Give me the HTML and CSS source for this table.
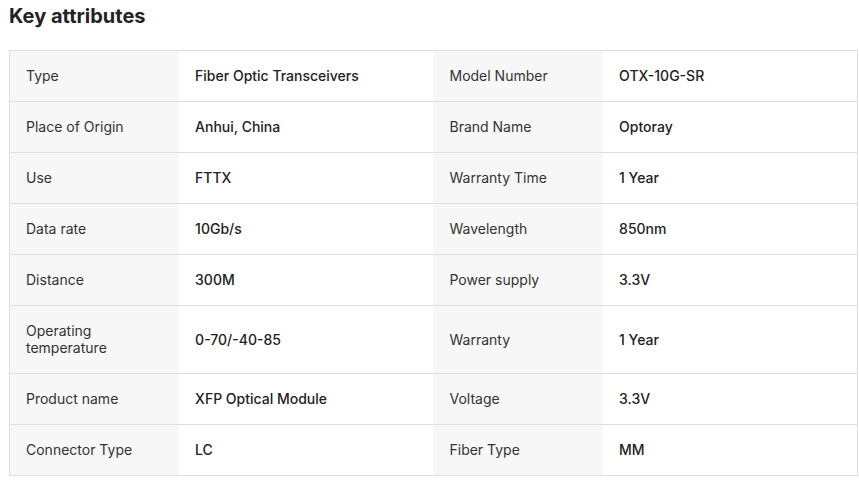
FILE: index.html
```html
<!DOCTYPE html>
<html lang="en">
<head>
<meta charset="utf-8">
<title>Key attributes</title>
<link rel="stylesheet" href="styles.css">
</head>
<body>
<section class="attrs">
  <h2 class="attrs-title">Key attributes</h2>
  <table class="attrs-table">
    <colgroup><col class="c-label"><col class="c-value"><col class="c-label"><col class="c-value"></colgroup>
    <tbody>
      <tr><td class="label">Type</td><td class="value">Fiber Optic Transceivers</td><td class="label">Model Number</td><td class="value">OTX-10G-SR</td></tr>
      <tr><td class="label">Place of Origin</td><td class="value">Anhui, China</td><td class="label">Brand Name</td><td class="value">Optoray</td></tr>
      <tr><td class="label">Use</td><td class="value">FTTX</td><td class="label">Warranty Time</td><td class="value">1 Year</td></tr>
      <tr><td class="label">Data rate</td><td class="value">10Gb/s</td><td class="label">Wavelength</td><td class="value">850nm</td></tr>
      <tr><td class="label">Distance</td><td class="value">300M</td><td class="label">Power supply</td><td class="value">3.3V</td></tr>
      <tr><td class="label">Operating temperature</td><td class="value">0-70/-40-85</td><td class="label">Warranty</td><td class="value">1 Year</td></tr>
      <tr><td class="label">Product name</td><td class="value">XFP Optical Module</td><td class="label">Voltage</td><td class="value">3.3V</td></tr>
      <tr><td class="label">Connector Type</td><td class="value">LC</td><td class="label">Fiber Type</td><td class="value">MM</td></tr>
    </tbody>
  </table>
</section>
</body>
</html>
```

FILE: styles.css
```css
html, body {
  margin: 0;
  padding: 0;
  background: #fff;
}
body {
  font-family: Inter, "Liberation Sans", sans-serif;
  color: #222;
}
.attrs {
  padding: 0 9px;
}
.attrs-title {
  margin: 0 0 18px;
  font-size: 20px;
  line-height: 32px;
  font-weight: 700;
  color: #222;
}
.attrs-table {
  width: 849px;
  border-collapse: collapse;
  table-layout: fixed;
  border: 1px solid #dedede;
  font-size: 14px;
  line-height: 17px;
}
.c-label { width: 20%; }
.c-value { width: 30%; }
.attrs-table tr {
  border-bottom: 1px solid #dedede;
}
.attrs-table td {
  padding: 16px 16px 17px;
  vertical-align: middle;
  text-align: left;
}
.label {
  background: #f7f7f7;
  color: #333;
  font-weight: 400;
}
.value {
  background: #fff;
  color: #222;
  font-weight: 500;
}
```
